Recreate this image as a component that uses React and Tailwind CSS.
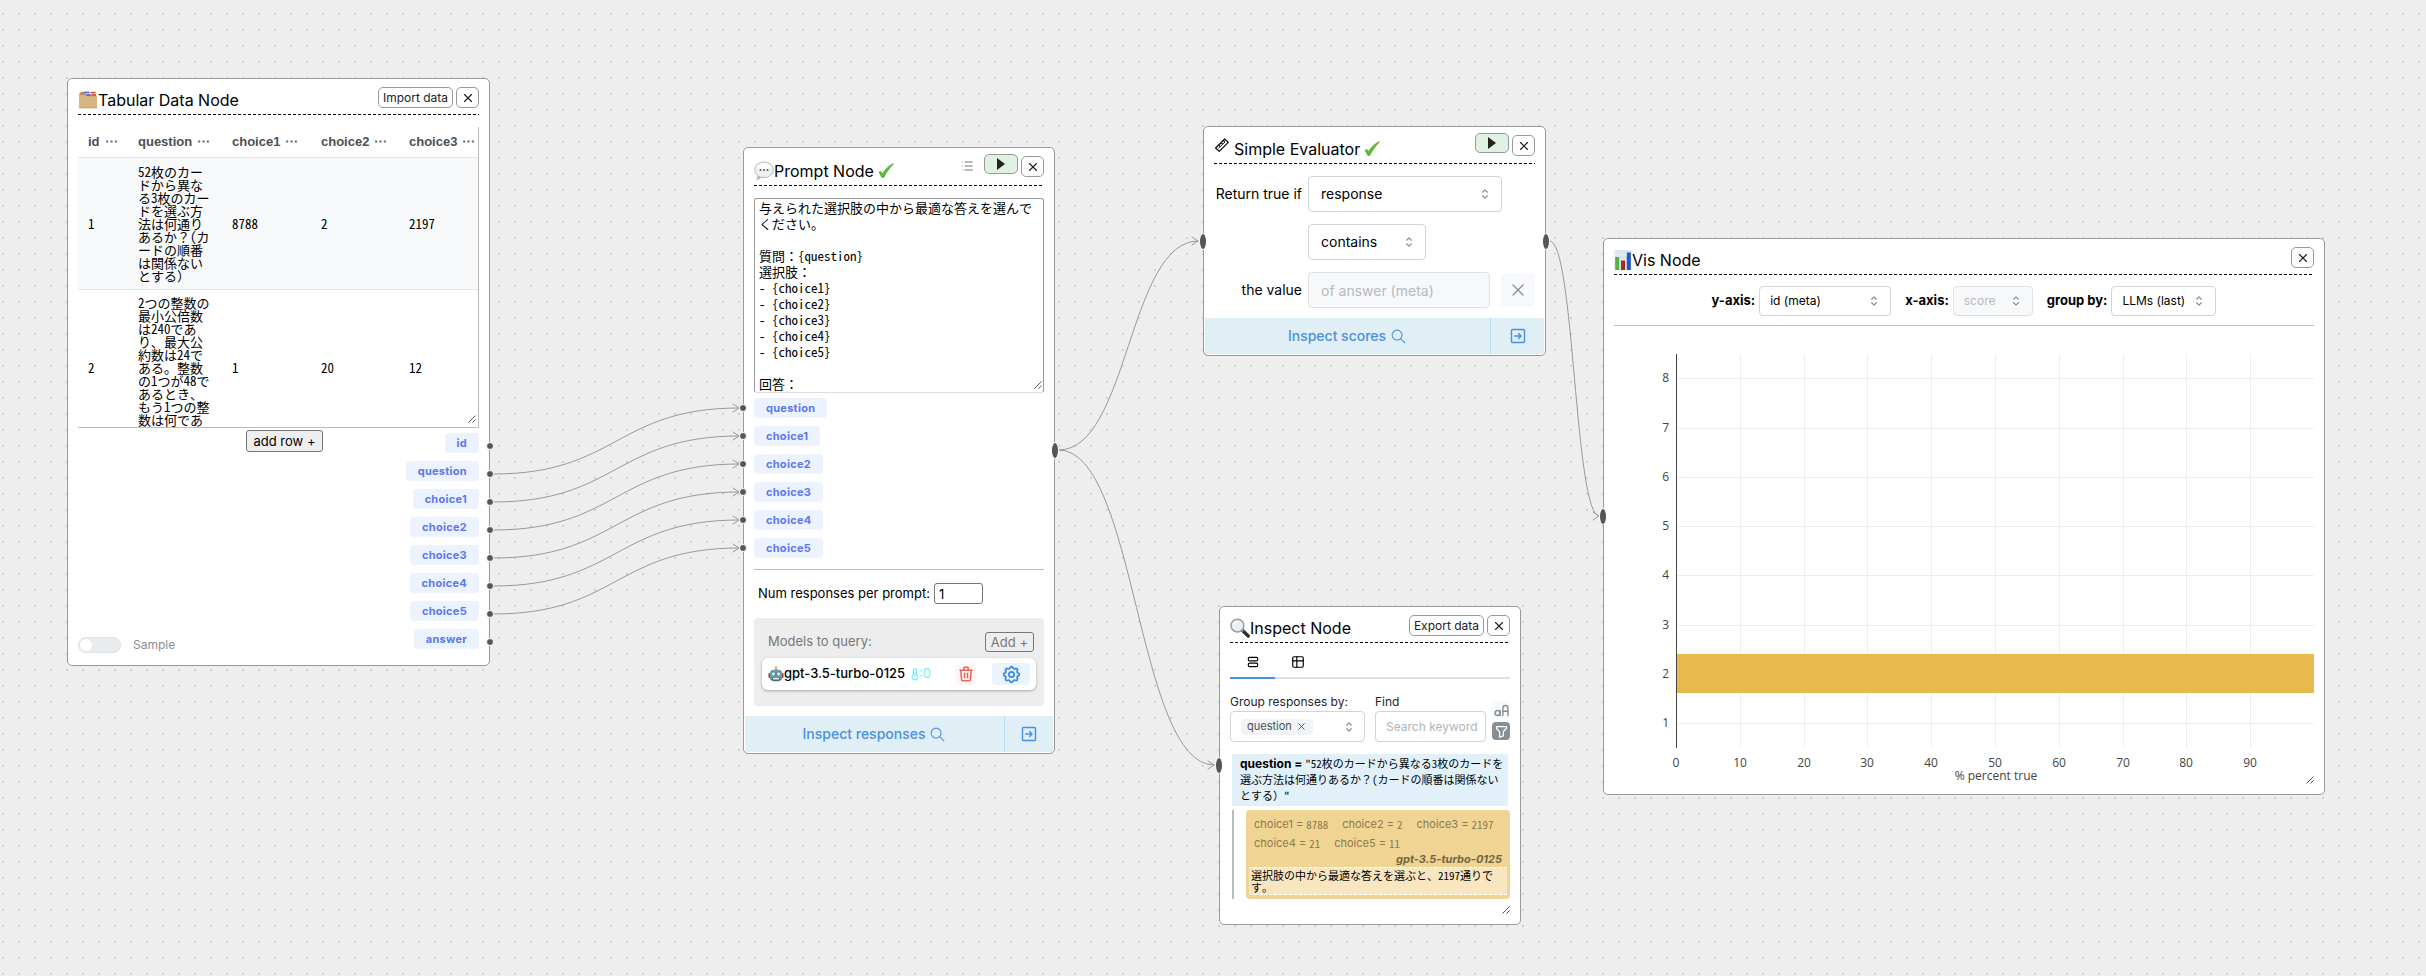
import React from "react";
import {
  TbDots,
  TbFilter,
  TbLayoutList,
  TbLetterCaseToggle,
  TbList,
  TbSearch,
  TbSelector,
  TbSettings,
  TbTable,
  TbTrash,
  TbX,
} from "react-icons/tb";

const MONO = "font-['Noto_Sans_Mono_CJK_JP','Noto_Sans_CJK_JP',monospace]";

/* ---------- drawings ---------- */

function FolderIcon() {
  return (
    <svg viewBox="0 0 20 20" className="h-5 w-5 shrink-0" aria-hidden="true">
      <path d="M1 4.5 3 1.8h4l1.2 1.7H18V10H1z" fill="#b98d55" />
      <rect x="6.5" y="1.6" width="5" height="2" fill="#5a62e6" />
      <rect x="12.5" y="1.8" width="5" height="2" fill="#e2493f" />
      <rect x="7.5" y="3.4" width="10.5" height="1.4" fill="#e9e4f0" />
      <rect x="8.5" y="4.2" width="4" height="1.4" fill="#4a58dd" />
      <rect x="13.5" y="4.2" width="4.6" height="1.4" fill="#e2493f" />
      <path d="M1 5h6l1 1.2h11V18.2H1z" fill="#d9b582" />
      <path d="M1 16.8h18v1.4H1z" fill="#cda873" />
    </svg>
  );
}

function SpeechIcon() {
  return (
    <svg viewBox="0 0 20 20" className="h-5 w-5 shrink-0" aria-hidden="true">
      <path d="M3.5 14 2.2 19.4 8 16.5z" fill="#b9b9b9" />
      <ellipse cx="10" cy="8.8" rx="9.4" ry="7.9" fill="#efefef" stroke="#b5b5b5" strokeWidth=".9" />
      <ellipse cx="10" cy="5.8" rx="7" ry="3.6" fill="#fafafa" />
      <circle cx="6.5" cy="9" r="1" fill="#555" />
      <circle cx="10" cy="9" r="1" fill="#555" />
      <circle cx="13.5" cy="9" r="1" fill="#555" />
    </svg>
  );
}

function RulerIcon() {
  return (
    <svg viewBox="0 0 16 16" className="h-4 w-4 shrink-0" fill="none" stroke="#111" strokeWidth="1.3" aria-hidden="true">
      <path d="M1.6 11 10.7 2l3.6 3.4L5.2 14.400z" strokeLinejoin="round" />
      <path d="M4.400 11.400 11 5" strokeWidth=".9" />
      <path d="M5 8.300l1.300 1.300M7.300 6l1.300 1.300M9.600 3.800l1.300 1.300" />
    </svg>
  );
}

function LensIcon() {
  return (
    <svg viewBox="0 0 20 20" className="h-5 w-5 shrink-0" aria-hidden="true">
      <path d="M11.5 11.5 18.2 18" stroke="#2d2f33" strokeWidth="3.4" strokeLinecap="round" />
      <path d="M11 11l2.4 2.4" stroke="#8b8f96" strokeWidth="2" />
      <circle cx="7.4" cy="7.6" r="6.4" fill="#e9eff5" stroke="#9a9da3" strokeWidth="1.5" />
      <path d="M3.6 7.4a4 4 0 0 1 3.8-3.8" stroke="#fff" strokeWidth="1.2" fill="none" />
    </svg>
  );
}

function BarsIcon() {
  return (
    <svg viewBox="0 0 18 20" className="h-5 w-[18px] shrink-0" aria-hidden="true">
      <rect width="17" height="20" x=".5" fill="#dbe5ee" />
      <path d="M.5 5h17M.5 10h17M.5 15h17" stroke="#f5f8fb" strokeWidth=".7" />
      <rect x="1.2" y="7" width="4" height="13" fill="#4fb53c" />
      <rect x="7" y="10.5" width="4" height="9.5" fill="#b3261e" />
      <rect x="12.8" y="2.5" width="4" height="17.5" fill="#2456c4" />
    </svg>
  );
}

function RobotIcon() {
  return (
    <svg viewBox="0 0 16 16" className="h-4 w-4 shrink-0" aria-hidden="true">
      <path d="M8 1.6V4" stroke="#888" strokeWidth="1.2" />
      <circle cx="8" cy="1.3" r="1.2" fill="#f2b632" />
      <rect x=".4" y="7" width="2.4" height="5" rx="1" fill="#b5423b" />
      <rect x="13.2" y="7" width="2.4" height="5" rx="1" fill="#b5423b" />
      <path d="M2 6.5C2 4.6 4 3.6 8 3.6s6 1 6 2.9V12c0 2.4-2 3.6-6 3.6S2 14.4 2 12z" fill="#6a9aa6" />
      <path d="M2.6 12.2c1 2 2.6 2.8 5.4 2.8s4.4-.8 5.4-2.8z" fill="#4c6b78" />
      <circle cx="5.3" cy="8" r="1.9" fill="#d6f5f8" stroke="#3d6b78" strokeWidth=".5" />
      <circle cx="10.7" cy="8" r="1.9" fill="#d6f5f8" stroke="#3d6b78" strokeWidth=".5" />
      <path d="M7.3 10.6 8 9.2l.7 1.4z" fill="#c4473f" />
      <rect x="5" y="12" width="6" height="1.5" fill="#dde7ea" />
    </svg>
  );
}

function CheckIcon() {
  return (
    <svg viewBox="0 0 16 16" className="ml-1 h-4 w-4 shrink-0" aria-hidden="true">
      <path
        d="M.6 9.2C1.400 7.900 3.300 7.700 4.600 9.900 7 6 10.700 2.200 14.600.4c.9-.3 1.300.4.800 1.200C11.800 5.200 8.800 9.600 6.500 14c-.8 1.400-2.800 1.500-3.400 0C2.500 12.400 1.600 10.800.6 9.200z"
        fill="#5fb83a"
      />
    </svg>
  );
}

function ThermoIcon() {
  return (
    <svg viewBox="0 0 8 14" className="h-3.5 w-2 shrink-0" fill="none" stroke="#6ff0f5" strokeWidth="1.2" aria-hidden="true">
      <path d="M2.5 7.5V3a1.500 1.500 0 0 1 3 0v4.500a2.900 2.900 0 1 1-3 0z" />
      <path d="M4 5v5" />
    </svg>
  );
}

function PanelIcon() {
  return (
    <svg viewBox="0 0 16 16" className="h-4 w-4" fill="none" stroke="#4a90e2" strokeWidth="1.4" strokeLinecap="round" strokeLinejoin="round" aria-hidden="true">
      <rect x="1.5" y="1.5" width="13" height="13" rx="1" />
      <path d="M4.8 8h6.2M8.6 5.5 11.1 8l-2.500 2.500" />
    </svg>
  );
}

function Grip({ className }) {
  return (
    <svg viewBox="0 0 8 8" className={"pointer-events-none absolute h-2 w-2 " + className} stroke="#444" strokeWidth=".9" aria-hidden="true">
      <path d="M.5 7.5 7.5.5M4.5 7.5l3-3" />
    </svg>
  );
}

/* ---------- shared parts ---------- */

function Node({ place, children }) {
  return (
    <section className={"absolute flex flex-col rounded-[5px] border border-[#999] bg-white " + place}>{children}</section>
  );
}

function Header({ icon, title, done, height, children }) {
  return (
    <header
      className={
        "mx-2.5 flex items-start bg-[repeating-linear-gradient(90deg,#000_0_3px,transparent_3px_5px)] bg-[length:100%_1px] bg-bottom bg-no-repeat " +
        height
      }
    >
      <h2 className="flex h-full flex-1 items-end pb-[3px]">
        <span className="flex h-6 items-center">
          {icon}
          <span className="text-base leading-6">{title}</span>
          {done && <CheckIcon />}
        </span>
      </h2>
      <div className="flex gap-[3px] pt-2">{children}</div>
    </header>
  );
}

function CloseButton() {
  return (
    <button aria-label="Close" className="flex h-[21px] w-[23px] items-center justify-center rounded-[5px] border border-[#999] bg-white text-[#222]">
      <TbX size={14} strokeWidth={2} />
    </button>
  );
}

function TextButton({ children }) {
  return <button className="h-[21px] rounded-[5px] border border-[#999] bg-white px-1 text-xs text-[#222]">{children}</button>;
}

function PlayButton() {
  return (
    <button aria-label="Run" className="-mt-0.5 flex h-5 w-[34px] items-center justify-center rounded-[5px] border border-[#999] bg-[#dff1e0]">
      <svg viewBox="0 0 8 12" className="h-3 w-2" aria-hidden="true">
        <path d="M0 0 8 6 0 12z" fill="#222" />
      </svg>
    </button>
  );
}

function Dot({ className }) {
  return <span className={"absolute h-2 w-2 rounded-full border border-white bg-[#555] " + className} />;
}

function Oval({ className }) {
  return <span className={"absolute h-[17px] w-2 rounded-[50%] border border-white bg-[#555] " + className} />;
}

function Tag({ children }) {
  return <span className="flex h-5 items-center rounded bg-[#edf2ff] px-3 text-[11px] font-bold tracking-wide text-[#5b78f2]">{children}</span>;
}

function Select({ label, value, size, disabled, text = "pl-3 text-sm" }) {
  return (
    <span className={"relative flex " + size}>
      <select
        aria-label={label}
        disabled={disabled}
        className={
          "h-full w-full appearance-none rounded border pr-6 opacity-100 " +
          text +
          (disabled ? " border-[#dee2e6] bg-[#f6f8fa] text-[#b6babe]" : " border-[#ced4da] bg-white text-black")
        }
      >
        <option>{value}</option>
      </select>
      <TbSelector size={14} className="pointer-events-none absolute right-2.5 top-1/2 -translate-y-1/2 text-[#868e96]" />
    </span>
  );
}

function Footer({ label, side }) {
  return (
    <footer className="m-px mt-2.5 flex h-9 bg-[#e0eff6] text-sm font-medium text-[#4a90e2]">
      <button className="flex flex-1 items-center justify-center gap-1">
        {label}
        <TbSearch size={17} strokeWidth={1.5} />
      </button>
      <button aria-label="Open in drawer" className={"flex items-center justify-center border-l border-[#bcd8f8] " + side}>
        <PanelIcon />
      </button>
    </footer>
  );
}

/* ---------- nodes ---------- */

const columns = ["id", "question", "choice1", "choice2", "choice3"];
const rows = [
  ["1", "52枚のカードから異なる3枚のカードを選ぶ方法は何通りあるか？(カードの順番は関係ないとする）", "8788", "2", "2197"],
  ["2", "2つの整数の最小公倍数は240であり、最大公約数は24である。整数の1つが48であるとき、もう1つの整数は何であるか？", "1", "20", "12"],
];
const choices = ["choice1", "choice2", "choice3", "choice4", "choice5"];

function TabularNode() {
  return (
    <Node place="left-[67px] top-[78px] w-[423px]">
      <Header icon={<FolderIcon />} title="Tabular Data Node" height="h-9">
        <TextButton>Import data</TextButton>
        <CloseButton />
      </Header>
      <div className="relative mx-2.5 mt-3 h-[301px] overflow-hidden border-b border-r border-[#bbb]">
        <table className="w-[411px] table-fixed border-collapse text-left">
          <colgroup>
            <col className="w-[50px]" />
            <col className="w-[94px]" />
            <col className="w-[89px]" />
            <col className="w-[88px]" />
            <col className="w-[90px]" />
          </colgroup>
          <thead>
            <tr className="h-[30px] border-b border-[#e2e5e8]">
              {columns.map((c) => (
                <th key={c} className="whitespace-nowrap p-0 pl-2.5 font-['Liberation_Sans',sans-serif] text-[13px] text-[#495057]">
                  <span className="flex h-7 items-center gap-1">
                    {c}
                    <TbDots size={15} className="text-[#777d84]" />
                  </span>
                </th>
              ))}
            </tr>
          </thead>
          <tbody className={"text-[13px] leading-[13px] text-black " + MONO}>
            {rows.map((r, i) => (
              <tr key={r[0]} className={"border-b border-[#e2e5e8] " + (i ? "h-[157px]" : "h-[132px] bg-[#f8f9fa]")}>
                {r.map((v, j) => (
                  <td key={j} className="p-0 pl-2.5 pr-2 align-middle">
                    {v}
                  </td>
                ))}
              </tr>
            ))}
          </tbody>
        </table>
        <Grip className="bottom-1 right-0.5" />
      </div>
      <div className="relative mx-2.5 flex justify-center pl-3">
        <button className="absolute top-0.5 h-[22px] rounded-[3px] border border-[#767676] bg-[#efefef] px-1.5 text-[13px] leading-5 text-black">add row +</button>
      </div>
      <div className="flex items-end justify-between pb-4 pl-2.5 pt-[5px]">
        <label className="-mb-1 flex items-center gap-3 text-xs text-[#868e96]">
          <input type="checkbox" className="peer sr-only" />
          <span className="flex h-4 w-[43px] items-center rounded-full border border-[#dee2e6] bg-[#e9ecef] pl-px">
            <span className="h-3 w-3 rounded-full bg-white" />
          </span>
          Sample
        </label>
        <div className="flex flex-col gap-2">
          {["id", "question", ...choices, "answer"].map((t) => (
            <div key={t} className="relative flex justify-end pr-2.5">
              <Tag>{t}</Tag>
              <Dot className="-right-[5px] top-[9px]" />
            </div>
          ))}
        </div>
      </div>
    </Node>
  );
}

const promptText = `与えられた選択肢の中から最適な答えを選んでください。

質問：{question}
選択肢：
- {choice1}
- {choice2}
- {choice3}
- {choice4}
- {choice5}

回答：`;

function PromptNode() {
  return (
    <Node place="left-[743px] top-[147px] w-[312px]">
      <Header icon={<SpeechIcon />} title="Prompt Node" done height="h-[38px]">
        <button aria-label="Show prompts" className="mr-1.5 flex h-5 items-center text-[#777]">
          <TbList size={16} strokeWidth={1.5} />
        </button>
        <PlayButton />
        <CloseButton />
      </Header>
      <div className="relative mx-2.5 mt-3 flex">
        <textarea
          aria-label="Prompt template"
          defaultValue={promptText}
          className={"h-[195px] w-full resize-none overflow-hidden rounded-[3px] border border-[#999] border-b-[#ddd] px-1 pt-px text-[13px] leading-4 text-black " + MONO}
        />
        <Grip className="bottom-1 right-0.5" />
      </div>
      <div className="mt-[5px] flex flex-col gap-2">
        {["question", ...choices].map((t) => (
          <div key={t} className="relative flex pl-2.5">
            <Tag>{t}</Tag>
            <Dot className="-left-[5px] top-1.5" />
          </div>
        ))}
      </div>
      <hr className="mx-2.5 mt-[11px] border-[#bbb]" />
      <label className="mt-[13px] flex items-center gap-1 pl-3.5 text-[13px]">
        Num responses per prompt:
        <input type="text" defaultValue="1" className="h-[21px] w-[49px] rounded-[3px] border border-[#767676] pl-1 text-[13px]" />
      </label>
      <div className="mx-2.5 mt-3.5 rounded bg-[#ededed] px-2 pb-4 pt-3.5 text-[13px]">
        <div className="flex items-center justify-between pl-1.5 pr-0.5 text-[#777]">
          Models to query:
          <button className="h-5 rounded-[3px] border border-[#777] px-[5px] text-[13px] leading-4">Add +</button>
        </div>
        <div className="mt-1.5 flex h-8 items-center rounded-md bg-white pl-1.5 pr-1.5 shadow-[0_1px_3px_rgba(0,0,0,0.3)]">
          <RobotIcon />
          <span className="font-medium text-black">gpt-3.5-turbo-0125</span>
          <span className="ml-1.5 flex flex-1 items-center text-[#6ff0f5]">
            <ThermoIcon />
            :0
          </span>
          <button aria-label="Remove model" className="flex h-[22px] w-[21px] items-center justify-center rounded bg-[#fff5f5] text-[#e8635f]">
            <TbTrash size={18} strokeWidth={2} />
          </button>
          <button aria-label="Model settings" className="ml-4 flex h-[22px] w-[38px] items-center justify-center rounded bg-[#e9f4fd] text-[#3f8ae0]">
            <TbSettings size={21} strokeWidth={2} />
          </button>
        </div>
      </div>
      <Footer label="Inspect responses" side="w-[49px]" />
      <Oval className="-right-[5px] top-[294px]" />
    </Node>
  );
}

function EvaluatorNode() {
  return (
    <Node place="left-[1203px] top-[126px] w-[343px]">
      <Header
        icon={
          <span className="mr-1 flex h-6 items-start">
            <RulerIcon />
          </span>
        }
        title="Simple Evaluator"
        done
        height="h-[37px]"
      >
        <PlayButton />
        <CloseButton />
      </Header>
      <div className="mx-2.5 mt-3 grid grid-cols-[88px_1fr] items-center gap-x-1.5 gap-y-3 whitespace-nowrap text-right text-sm">
        <span>Return true if</span>
        <Select label="Return true if" value="response" size="h-9 w-[194px]" />
        <span />
        <Select label="Comparison" value="contains" size="h-9 w-[118px]" />
        <label htmlFor="value">the value</label>
        <span className="flex items-center justify-between">
          <input id="value" type="text" disabled placeholder="of answer (meta)" className="h-9 w-[182px] rounded border border-[#dee2e6] bg-[#f6f8fa] pl-3 placeholder:text-[#b6babe]" />
          <button aria-label="Clear value" className="flex h-[34px] w-[34px] items-center justify-center rounded bg-[#f8f9fa] text-[#868e96]">
            <TbX size={20} strokeWidth={1.5} />
          </button>
        </span>
      </div>
      <Footer label="Inspect scores" side="w-[54px]" />
      <Oval className="-left-[5px] top-[106px]" />
      <Oval className="-right-[5px] top-[106px]" />
    </Node>
  );
}

function Pair({ name, value }) {
  return (
    <span className="flex h-[19px] items-center gap-[3px] text-[11px] text-[#8d7a4c]">
      <span>{name} =</span>
      <span className={MONO}>{value}</span>
    </span>
  );
}

function InspectNode() {
  return (
    <Node place="left-[1219px] top-[606px] w-[302px]">
      <Header icon={<LensIcon />} title="Inspect Node" height="h-9">
        <TextButton>Export data</TextButton>
        <CloseButton />
      </Header>
      <div role="tablist" className="mx-2.5 flex border-b-2 border-[#dee2e6] pt-1">
        <button role="tab" aria-selected="true" aria-label="Grouped list" className="-mb-0.5 flex h-8 w-[45px] items-center justify-center border-b-2 border-[#4a90e2]">
          <TbLayoutList size={14} />
        </button>
        <button role="tab" aria-selected="false" aria-label="Table" className="flex h-[30px] w-[46px] items-center justify-center">
          <TbTable size={14} />
        </button>
      </div>
      <div className="mx-2.5 mt-3.5 flex text-xs text-[#212529]">
        <div className="w-[135px]">
          <span className="block leading-[18px]">Group responses by:</span>
          <div className="relative flex h-[31px] items-center rounded border border-[#ced4da] pl-2.5">
            <span className="flex h-4 items-center gap-1 rounded bg-[#f1f3f5] px-1.5 text-[11px] text-[#495057]">
              question
              <button aria-label="Remove question">
                <TbX size={11} />
              </button>
            </span>
            <TbSelector size={14} className="absolute right-2 text-[#868e96]" />
          </div>
        </div>
        <label className="ml-2.5 flex w-[111px] flex-col leading-[18px]">
          Find
          <input type="text" placeholder="Search keyword" className="h-[31px] w-full rounded border border-[#ced4da] pl-2.5 placeholder:text-[#adb5bd]" />
        </label>
        <div className="ml-1.5 mt-2 flex flex-col gap-[3px]">
          <button aria-label="Match case" className="flex h-[18px] w-[18px] items-center justify-center rounded bg-[#f8f9fa] text-[#868e96]">
            <TbLetterCaseToggle size={17} />
          </button>
          <button aria-label="Filter" className="flex h-[18px] w-[18px] items-center justify-center rounded bg-[#868e96] text-white">
            <TbFilter size={15} />
          </button>
        </div>
      </div>
      <div className="mx-3 mt-3 bg-[#e2f1f9] py-0.5 pl-2 pr-1 text-[11px] leading-[15px] text-black">
        <b className="text-xs leading-[15px]">question = </b>
        <span className={MONO}>"52枚のカードから異なる3枚のカードを選ぶ方法は何通りあるか？(カードの順番は関係ないとする）"</span>
      </div>
      <div className="ml-3 mr-2.5 mt-1 border-l-2 border-[#bbb] pl-3">
        <div className="rounded bg-[#f0d494] p-[3px] pb-1">
          <div className="flex flex-wrap gap-x-3.5 pl-[5px] pt-0.5">
            <Pair name="choice1" value="8788" />
            <Pair name="choice2" value="2" />
            <Pair name="choice3" value="2197" />
            <Pair name="choice4" value="21" />
            <Pair name="choice5" value="11" />
          </div>
          <p className="-mt-0.5 pr-[5px] text-right text-[11px] font-bold italic leading-4 text-[#74653d]">gpt-3.5-turbo-0125</p>
          <p className={"border-y border-dashed border-white bg-[#f7e6c0] py-px pl-0.5 pr-2.5 text-[11px] leading-3 text-black " + MONO}>選択肢の中から最適な答えを選ぶと、2197通りです。</p>
        </div>
      </div>
      <div className="h-[25px]" />
      <Grip className="bottom-2.5 right-2.5" />
      <Oval className="-left-[5px] top-[150px]" />
    </Node>
  );
}

const xTicks = [0, 10, 20, 30, 40, 50, 60, 70, 80, 90];
const yTicks = [1, 2, 3, 4, 5, 6, 7, 8];

function Chart() {
  const x = (v) => Math.round(62 + v * 6.38);
  const y = (v) => Math.round(397 - (v - 1) * 49.25);
  return (
    <svg viewBox="0 0 700 468" className="w-full font-['Open_Sans',sans-serif] text-xs" fill="#444" role="img" aria-label="Percent true by id">
      <g stroke="#eee" shapeRendering="crispEdges">
        {xTicks.slice(1).map((t) => (
          <line key={t} x1={x(t)} x2={x(t)} y1="28" y2="422" />
        ))}
        {yTicks.map((t) => (
          <line key={t} x1="62" x2="700" y1={y(t)} y2={y(t)} />
        ))}
      </g>
      <rect x="63" y="328" width="637" height="39" fill="#e8b94f" />
      <line x1="62" x2="62" y1="28" y2="422" stroke="#444" shapeRendering="crispEdges" />
      {xTicks.map((t) => (
        <text key={t} x={x(t)} y="441" textAnchor="middle">
          {t}
        </text>
      ))}
      {yTicks.map((t) => (
        <text key={t} x="55" y={y(t) + 4} textAnchor="end">
          {t}
        </text>
      ))}
      <text x="382" y="454" textAnchor="middle">
        % percent true
      </text>
    </svg>
  );
}

function VisNode() {
  return (
    <Node place="left-[1603px] top-[238px] w-[722px]">
      <Header icon={<BarsIcon />} title="Vis Node" height="h-9">
        <CloseButton />
      </Header>
      <div className="mx-2.5 flex h-[51px] items-center justify-center gap-3.5 border-b border-[#bbb] pt-0.5 text-[13px] font-bold text-black">
        <span className="flex items-center gap-1">
          y-axis:
          <Select label="y-axis" value="id (meta)" size="h-[30px] w-[132px] font-normal" text="pl-2.5 text-xs" />
        </span>
        <span className="flex items-center gap-1">
          x-axis:
          <Select label="x-axis" value="score" disabled size="h-[30px] w-[80px] font-normal" text="pl-2.5 text-xs" />
        </span>
        <span className="flex items-center gap-1">
          group by:
          <Select label="group by" value="LLMs (last)" size="h-[30px] w-[105px] font-normal" text="pl-2.5 text-xs" />
        </span>
      </div>
      <div className="mx-2.5">
        <Chart />
      </div>
      <Grip className="bottom-2.5 right-2.5" />
      <Oval className="-left-[5px] top-[269px]" />
    </Node>
  );
}

/* ---------- canvas ---------- */

// Each edge is [x1, y1, x2, y2]; the first six join table columns to prompt inputs.
const edges = [
  ...[0, 1, 2, 3, 4, 5].map((i) => [494, 474 + 28 * i, 739, 408 + 28 * i]),
  [1059, 450, 1198, 241],
  [1059, 450, 1214, 765],
  [1550, 241, 1599, 516],
];

function Edges() {
  return (
    <svg className="absolute inset-0 h-full w-full" fill="none" stroke="#999" strokeLinecap="round" strokeLinejoin="round" aria-hidden="true">
      {edges.map(([x1, y1, x2, y2]) => {
        const mid = (x1 + x2) / 2;
        return (
          <g key={x2 + "-" + y2}>
            <path d={`M${x1} ${y1}C${mid} ${y1} ${mid} ${y2} ${x2} ${y2}`} />
            <path d={`M${x2 - 6} ${y2 - 4}L${x2} ${y2}L${x2 - 6} ${y2 + 4}`} />
          </g>
        );
      })}
    </svg>
  );
}

export default function App() {
  return (
    <main className="relative min-h-screen overflow-hidden bg-[#eeeeee] bg-[radial-gradient(circle_at_3px_14px,#d0d0d0_1px,transparent_1px)] bg-[length:16px_16px] font-['Inter',sans-serif] text-black">
      <Edges />
      <TabularNode />
      <PromptNode />
      <EvaluatorNode />
      <InspectNode />
      <VisNode />
    </main>
  );
}
